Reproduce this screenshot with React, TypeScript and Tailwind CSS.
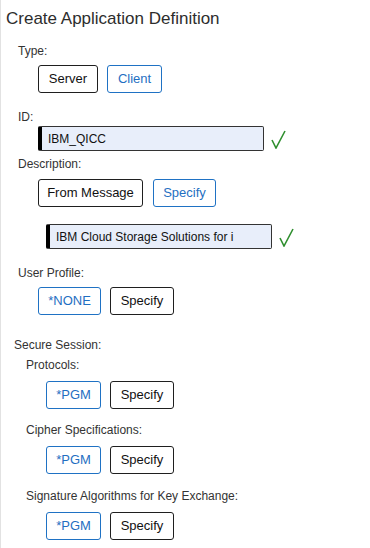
import React from 'react';

type Btn = { label: string; width: string; selected?: boolean };

function ChoiceButton({ label, width, selected }: Btn) {
  return (
    <button
      className={
        selected
          ? `${width} h-[28px] rounded-[3px] border border-[#1f1f1f] bg-white text-[13px] text-[#111]`
          : `${width} h-[28px] rounded-[3px] border border-[#1f72c4] bg-white text-[13px] text-[#1f6fc2]`
      }
    >
      {label}
    </button>
  );
}

function Check() {
  return (
    <svg width="16" height="20" viewBox="0 0 16 20" className="shrink-0">
      <path d="M2 11 L6 19 L15 2" fill="none" stroke="#2f8f2f" strokeWidth="1.6" />
    </svg>
  );
}

function Field({ value, width }: { value: string; width: string }) {
  return (
    <div className="flex items-center gap-[6px]">
      <div
        className={`${width} h-[25px] flex items-center rounded-[2px] border border-[#333] border-l-[4px] border-l-black bg-[#e8eefa] pl-[6px] text-[12px] text-[#111]`}
      >
        {value}
      </div>
      <Check />
    </div>
  );
}

function Label({ children, className }: { children: React.ReactNode; className: string }) {
  return <div className={`text-[12px] leading-[14px] text-[#333] ${className}`}>{children}</div>;
}

export default function App() {
  return (
    <div
      className="w-[370px] h-[548px] bg-white border-l border-[#e2e2e2] overflow-hidden"
      style={{ fontFamily: '"Liberation Sans", Arial, sans-serif' }}
    >
      <h1 className="ml-[5px] pt-[9px] text-[17px] leading-[20px] text-[#2d2d2d]">
        Create Application Definition
      </h1>

      <Label className="ml-[17px] mt-[15px]">Type:</Label>
      <div className="ml-[37px] mt-[7px] flex gap-[9px]">
        <ChoiceButton label="Server" width="w-[60px]" selected />
        <ChoiceButton label="Client" width="w-[55px]" />
      </div>

      <Label className="ml-[17px] mt-[17px]">ID:</Label>
      <div className="ml-[37px] mt-[2px]">
        <Field value="IBM_QICC" width="w-[226px]" />
      </div>

      <Label className="ml-[17px] mt-[6px]">Description:</Label>
      <div className="ml-[37px] mt-[8px] flex gap-[10px]">
        <ChoiceButton label="From Message" width="w-[105px]" selected />
        <ChoiceButton label="Specify" width="w-[63px]" />
      </div>
      <div className="ml-[45px] mt-[17px]">
        <Field value="IBM Cloud Storage Solutions for i" width="w-[226px]" />
      </div>

      <Label className="ml-[17px] mt-[17px]">User Profile:</Label>
      <div className="ml-[37px] mt-[7px] flex gap-[9px]">
        <ChoiceButton label="*NONE" width="w-[63px]" />
        <ChoiceButton label="Specify" width="w-[64px]" selected />
      </div>

      <Label className="ml-[13px] mt-[23px]">Secure Session:</Label>
      <Label className="ml-[25px] mt-[6px]">Protocols:</Label>
      <div className="ml-[45px] mt-[9px] flex gap-[9px]">
        <ChoiceButton label="*PGM" width="w-[55px]" />
        <ChoiceButton label="Specify" width="w-[64px]" selected />
      </div>

      <Label className="ml-[25px] mt-[14px]">Cipher Specifications:</Label>
      <div className="ml-[45px] mt-[9px] flex gap-[9px]">
        <ChoiceButton label="*PGM" width="w-[55px]" />
        <ChoiceButton label="Specify" width="w-[64px]" selected />
      </div>

      <Label className="ml-[25px] mt-[15px]">Signature Algorithms for Key Exchange:</Label>
      <div className="ml-[45px] mt-[9px] flex gap-[9px]">
        <ChoiceButton label="*PGM" width="w-[55px]" />
        <ChoiceButton label="Specify" width="w-[64px]" selected />
      </div>
    </div>
  );
}
